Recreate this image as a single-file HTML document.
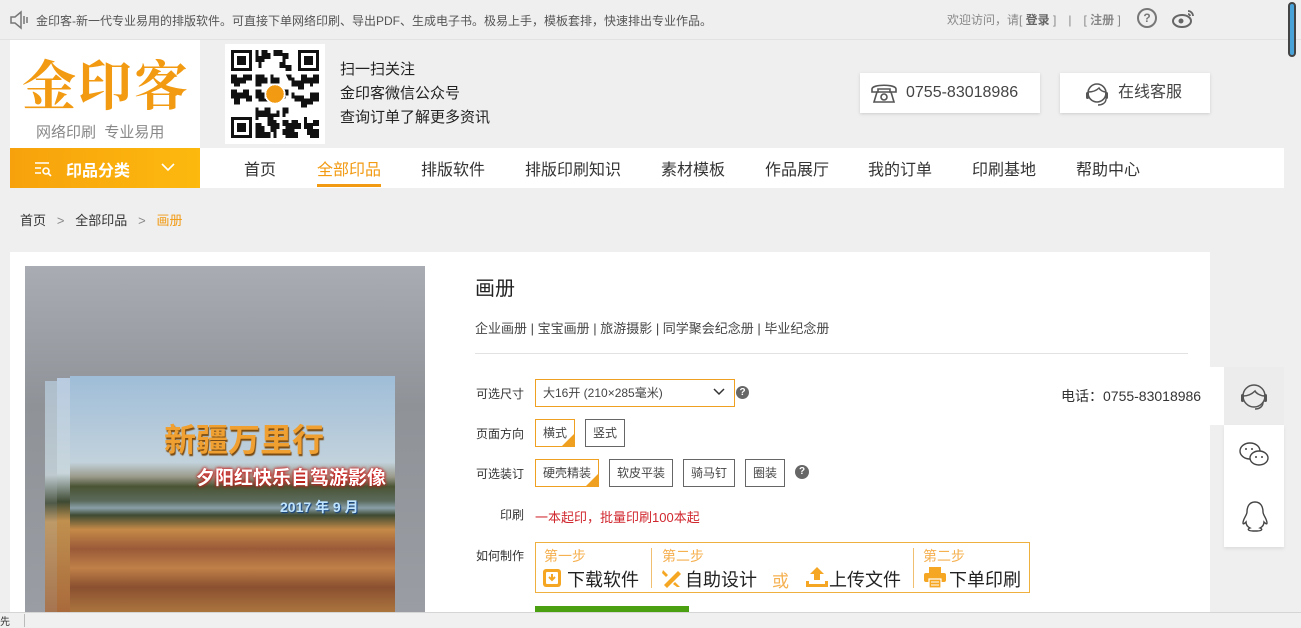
<!DOCTYPE html>
<html><head><meta charset="utf-8">
<style>
*{margin:0;padding:0;box-sizing:border-box}
body{width:1301px;height:627px;overflow:hidden;background:#efefef;font-family:"Liberation Sans","Noto Sans CJK SC",sans-serif;color:#333;position:relative;font-size:13px}
.a{position:absolute}
.top{top:0;left:0;width:1301px;height:40px;border-bottom:1px solid #e2e2e2;font-size:12px;color:#555}
.nav a{position:absolute;top:156px;font-size:16px;color:#333}
.opt{position:absolute;height:28px;border:1px solid #666;background:#fff;font-size:12px;line-height:26px;padding:0 7px;color:#444}
.sel{border-color:#f0a020}
.sel:after{content:"";position:absolute;right:0;bottom:0;border-style:solid;border-width:0 0 12px 12px;border-color:transparent transparent #f0a020 transparent}
.lbl{position:absolute;font-size:12px;color:#333}
</style></head><body>
<div class="a top">
 <svg class="a" style="left:8px;top:10px" width="22" height="20" viewBox="0 0 22 20"><path d="M3 7h4l6-5v16l-6-5H3z" fill="none" stroke="#777" stroke-width="1.5"/><path d="M16 6v8M19 7v6" stroke="#777" stroke-width="1.5"/></svg>
 <div class="a" style="left:36px;top:12px">金印客-新一代专业易用的排版软件。可直接下单网络印刷、导出PDF、生成电子书。极易上手，模板套排，快速排出专业作品。</div>
 <div class="a" style="left:947px;top:11px;color:#888">欢迎访问，请[ <b style="color:#666">登录</b> ]　|　[ <b style="color:#888">注册</b> ]</div>
 <div class="a" style="left:1137px;top:8px;width:20px;height:20px;border:2px solid #777;border-radius:50%;text-align:center;line-height:16px;font-weight:bold;color:#777">?</div>
 <svg class="a" style="left:1172px;top:8px" width="24" height="20" viewBox="0 0 24 20"><ellipse cx="10" cy="13" rx="9" ry="6" fill="none" stroke="#666" stroke-width="2"/><circle cx="9" cy="13" r="2.5" fill="#666"/><path d="M16 3a5 5 0 0 1 5 5M16 6a2 2 0 0 1 2 2" fill="none" stroke="#666" stroke-width="1.8"/></svg>
</div>
<div class="a" style="left:1288px;top:2px;width:8px;height:55px;border:2px solid #444;border-radius:4px;background:#4aa3d8"></div>
<div class="a" style="left:10px;top:40px;width:190px;height:108px;background:#fff"></div>
<div class="a" style="left:22px;top:48px;font-size:54px;font-weight:bold;color:#f29a12;font-family:'Noto Serif CJK SC',serif;letter-spacing:2px;line-height:70px">金印客</div>
<div class="a" style="left:36px;top:121px;font-size:15px;color:#888">网络印刷&nbsp;&nbsp;专业易用</div>
<div class="a" style="left:225px;top:44px;width:100px;height:100px;background:#fff"></div>
<svg class="a" style="left:231px;top:50px" width="88" height="88" viewBox="0 0 29 29" shape-rendering="crispEdges">
<rect width="29" height="29" fill="#fff"/>
<g fill="#111"><rect x="0" y="0" width="7" height="7"/><rect x="22" y="0" width="7" height="7"/><rect x="0" y="22" width="7" height="7"/></g>
<g fill="#fff"><rect x="1" y="1" width="5" height="5"/><rect x="23" y="1" width="5" height="5"/><rect x="1" y="23" width="5" height="5"/></g>
<g fill="#111"><rect x="2" y="2" width="3" height="3"/><rect x="24" y="2" width="3" height="3"/><rect x="2" y="24" width="3" height="3"/>
<path d="M8 0h1v2h1V0h2v1h1v2h-2v1h-1v2H9V4H8zM14 0h3v1h2v2h-1v2h2v2h-2V6h-2V4h1V2h-3zM0 8h2v1h2V8h3v2H5v1H3v1H1v-1H0zM8 8h3v1h1v2h-2v1H8zM13 8h1v1h2v2h-3zM18 8h2v1h1v1h2V8h2v1h2V8h2v3h-2v1h-1v-1h-2v2h-2v-1h-2v-2h-1zM0 13h2v1h2v-1h2v2h1v2H5v-1H3v2H1v-2H0zM8 13h2v1h1v2h2v1H9v-1H8zM17 13h2v2h-1v1h-1zM20 14h1v1h3v1h2v-2h3v3h-2v1h-2v1h-2v-2h-2v-1h-1zM8 19h1v1h2v-1h2v2h2v-1h1v2h-2v1h-2v-1H9v1H8zM17 19h2v2h-1v1h-1zM8 24h2v1h1v2h2v2H8zM12 23h3v1h1v2h-1v1h-2v-2h-1zM17 23h2v1h1v-1h2v1h1v2h-2v1h1v2h-4v-1h-1v-2h1v-1h-1zM24 22h1v2h2v-1h2v2h-2v1h2v3h-3v-1h-1v-2h-1zM14 27h1v2h-1z"/></g>
<circle cx="14.5" cy="14.5" r="3.2" fill="#f29a12" stroke="#fff" stroke-width=".6"/></svg>
<div class="a" style="left:340px;top:58px;font-size:15px;line-height:24px;color:#222">扫一扫关注<br>金印客微信公众号<br>查询订单了解更多资讯</div>
<div class="a" style="left:860px;top:73px;width:180px;height:40px;background:#fff;box-shadow:0 1px 3px #ccc;font-size:16px;line-height:40px;padding-left:46px;color:#444">0755-83018986</div>
<svg class="a" style="left:870px;top:80px" width="28" height="26" viewBox="0 0 28 26"><path d="M2 9c0-5 24-5 24 0v3h-6V9H8v3H2z" fill="none" stroke="#555" stroke-width="1.6"/><path d="M7 12l-3 10h20l-3-10z" fill="none" stroke="#555" stroke-width="1.6"/><circle cx="14" cy="17" r="3" fill="none" stroke="#555" stroke-width="1.6"/></svg>
<div class="a" style="left:1060px;top:73px;width:150px;height:40px;background:#fff;box-shadow:0 1px 3px #ccc;font-size:16px;line-height:40px;padding-left:58px;color:#444">在线客服</div>
<svg class="a" style="left:1083px;top:80px" width="28" height="28" viewBox="0 0 28 28"><circle cx="14" cy="13" r="9" fill="none" stroke="#555" stroke-width="1.6"/><path d="M5 12c4 0 8-1 11-4 1 2 4 4 7 4" fill="none" stroke="#555" stroke-width="1.4"/><rect x="3" y="12" width="3" height="7" rx="1.5" fill="#555"/><rect x="22" y="12" width="3" height="7" rx="1.5" fill="#555"/><path d="M23 19c0 4-4 6-8 6" fill="none" stroke="#555" stroke-width="1.4"/></svg>
<div class="a" style="left:10px;top:148px;width:1274px;height:40px;background:#fff"></div>
<div class="a" style="left:10px;top:148px;width:190px;height:40px;background:linear-gradient(90deg,#f7a20c,#fdb90e)"></div>
<svg class="a" style="left:34px;top:161px" width="18" height="16" viewBox="0 0 18 16"><path d="M1 2h14M1 7h6M1 12h6" stroke="#fff" stroke-width="1.6"/><circle cx="12" cy="10" r="3" fill="none" stroke="#fff" stroke-width="1.6"/><path d="M14 12l3 3" stroke="#fff" stroke-width="1.6"/></svg>
<div class="a" style="left:66px;top:157px;font-size:16px;font-weight:bold;color:#fff">印品分类</div>
<svg class="a" style="left:160px;top:162px" width="16" height="10" viewBox="0 0 16 10"><path d="M2 2l6 6 6-6" fill="none" stroke="#fff" stroke-width="1.6"/></svg>
<div class="nav">
<a style="left:244px">首页</a><a style="left:317px;color:#f29a12">全部印品</a><a style="left:421px">排版软件</a><a style="left:525px">排版印刷知识</a><a style="left:661px">素材模板</a><a style="left:765px">作品展厅</a><a style="left:868px">我的订单</a><a style="left:972px">印刷基地</a><a style="left:1076px">帮助中心</a>
</div>
<div class="a" style="left:317px;top:184px;width:64px;height:3px;background:#f29a12"></div>
<div class="a" style="left:20px;top:210px;font-size:13px;color:#333">首页 &nbsp;&nbsp;<span style="color:#888">&gt;</span>&nbsp;&nbsp; 全部印品 &nbsp;&nbsp;<span style="color:#888">&gt;</span>&nbsp;&nbsp; <span style="color:#f29a12">画册</span></div>
<div class="a" style="left:10px;top:252px;width:1200px;height:375px;background:#fff"></div>
<div class="a" style="left:25px;top:266px;width:400px;height:350px;background:linear-gradient(180deg,#a9acb3,#8f9398 40%,#9a9ea4)"></div>
<div class="a" style="left:45px;top:381px;width:20px;height:235px;background:linear-gradient(180deg,#b5c8d8 0%,#c8d6dc 40%,#3e4a32 52%,#c89a5a 60%,#a8683a);opacity:.8"></div>
<div class="a" style="left:57px;top:378px;width:15px;height:238px;background:linear-gradient(180deg,#b8cbe0 0%,#c8d6dc 40%,#3e4a32 52%,#c0904f 60%,#a8683a)"></div>
<div class="a" style="left:70px;top:376px;width:325px;height:240px;background:linear-gradient(180deg,#9fbdd8 0%,#c2d2dc 36%,#9a9a8a 42%,#4a5434 46%,#5b6a5c 52%,#8aa0a8 55%,#3e4a32 58%,#c58a48 64%,#9a5a38 72%,#c08048 80%,#8a5030 88%,#b07a40 100%)"></div>
<div class="a" style="left:164px;top:415px;font-size:32px;font-weight:bold;color:#f0a030;text-shadow:1px 2px 1px #7a4a10">新疆万里行</div>
<div class="a" style="left:196px;top:463px;font-size:19px;font-weight:bold;color:#fff;text-shadow:0 0 3px #d01010,0 0 3px #d01010">夕阳红快乐自驾游影像</div>
<div class="a" style="left:280px;top:497px;font-size:14px;font-weight:bold;color:#bfe4ff;text-shadow:1px 1px 1px #104080">2017 年 9 月</div>
<div class="a" style="left:475px;top:272px;font-size:20px;color:#222">画册</div>
<div class="a" style="left:475px;top:318px;font-size:13px;color:#444">企业画册 | 宝宝画册 | 旅游摄影 | 同学聚会纪念册 | 毕业纪念册</div>
<div class="a" style="left:475px;top:353px;width:713px;height:1px;background:#e2e2e2"></div>
<div class="lbl" style="left:476px;top:385px">可选尺寸</div>
<div class="opt" style="left:535px;top:379px;width:200px;border-color:#f0a020;font-size:12px">大16开 (210×285毫米)</div>
<svg class="a" style="left:713px;top:388px" width="12" height="8" viewBox="0 0 12 8"><path d="M1 1l5 5 5-5" fill="none" stroke="#333" stroke-width="1.5"/></svg>
<div class="a" style="left:736px;top:386px;width:13px;height:13px;border-radius:50%;background:#666;color:#fff;font-size:10px;text-align:center;line-height:13px;font-weight:bold">?</div>
<div class="lbl" style="left:476px;top:425px">页面方向</div>
<div class="opt sel" style="left:535px;top:419px">横式</div>
<div class="opt" style="left:585px;top:419px">竖式</div>
<div class="lbl" style="left:476px;top:465px">可选装订</div>
<div class="opt sel" style="left:535px;top:459px">硬壳精装</div>
<div class="opt" style="left:609px;top:459px">软皮平装</div>
<div class="opt" style="left:683px;top:459px">骑马钉</div>
<div class="opt" style="left:745px;top:459px">圈装</div>
<div class="a" style="left:795px;top:465px;width:14px;height:14px;border-radius:50%;background:#666;color:#fff;font-size:10px;text-align:center;line-height:14px;font-weight:bold">?</div>
<div class="lbl" style="left:500px;top:506px">印刷</div>
<div class="a" style="left:535px;top:507px;font-size:13px;color:#d0282f">一本起印，批量印刷100本起</div>
<div class="lbl" style="left:476px;top:547px">如何制作</div>
<div class="a" style="left:535px;top:542px;width:495px;height:51px;border:1px solid #f0b040;background:#fff"></div>
<div class="a" style="left:651px;top:548px;width:1px;height:40px;background:#f0c070"></div>
<div class="a" style="left:913px;top:548px;width:1px;height:40px;background:#f0c070"></div>
<div class="a" style="left:544px;top:546px;font-size:14px;color:#f5b050">第一步</div>
<div class="a" style="left:662px;top:546px;font-size:14px;color:#f5b050">第二步</div>
<div class="a" style="left:923px;top:546px;font-size:14px;color:#f5b050">第二步</div>
<svg class="a" style="left:543px;top:569px" width="18" height="18" viewBox="0 0 18 18"><rect width="18" height="18" rx="3" fill="#f5a623"/><rect x="3" y="3" width="12" height="12" rx="1" fill="#fff"/><path d="M9 5v6M6 8l3 3 3-3" stroke="#f5a623" stroke-width="2" fill="none"/></svg>
<div class="a" style="left:567px;top:566px;font-size:18px;color:#222">下载软件</div>
<svg class="a" style="left:661px;top:568px" width="22" height="20" viewBox="0 0 22 20"><path d="M3 17L17 3l3 3L6 20z" fill="#f5a623"/><path d="M2 2l5 5-2 2-4-4zM14 14l5 5-3 0-4-3z" fill="#f5a623"/></svg>
<div class="a" style="left:685px;top:566px;font-size:18px;color:#222">自助设计</div>
<div class="a" style="left:772px;top:567px;font-size:17px;color:#f5b050">或</div>
<svg class="a" style="left:806px;top:567px" width="22" height="20" viewBox="0 0 22 20"><path d="M11 0l7 7h-4v6H8V7H4z" fill="#f5a623"/><path d="M0 14h3v3h16v-3h3v6H0z" fill="#f5a623"/></svg>
<div class="a" style="left:829px;top:566px;font-size:18px;color:#222">上传文件</div>
<svg class="a" style="left:924px;top:567px" width="22" height="21" viewBox="0 0 22 21"><rect x="5" y="0" width="12" height="6" fill="#f5a623"/><rect x="0" y="6" width="22" height="9" rx="2" fill="#f5a623"/><rect x="5" y="12" width="12" height="9" fill="#f5a623" stroke="#fff" stroke-width="1.2"/><path d="M7 15h8M7 18h8" stroke="#fff"/></svg>
<div class="a" style="left:949px;top:566px;font-size:18px;color:#222">下单印刷</div>
<div class="a" style="left:535px;top:606px;width:154px;height:8px;background:#4aa010"></div>
<div class="a" style="left:1050px;top:367px;width:174px;height:58px;background:#fff;font-size:14px;line-height:58px;padding-left:11px;color:#333">电话：0755-83018986</div>
<div class="a" style="left:1224px;top:367px;width:60px;height:58px;background:#ececec"></div>
<svg class="a" style="left:1237px;top:380px" width="34" height="34" viewBox="0 0 34 34"><circle cx="17" cy="16" r="11" fill="none" stroke="#555" stroke-width="1.5"/><path d="M6 16c5 0 9-2 12-5 1 2 5 5 10 5M26 22c0 5-4 7-8 7" fill="none" stroke="#555" stroke-width="1.5"/><rect x="4" y="14" width="3" height="8" rx="1.5" fill="#555"/><rect x="27" y="14" width="3" height="8" rx="1.5" fill="#555"/></svg>
<div class="a" style="left:1224px;top:425px;width:60px;height:122px;background:#fff;box-shadow:0 2px 3px #ddd"></div>
<svg class="a" style="left:1237px;top:440px" width="34" height="30" viewBox="0 0 34 30"><ellipse cx="13" cy="11" rx="10" ry="8" fill="#fff" stroke="#444" stroke-width="1.4"/><ellipse cx="22" cy="18" rx="9" ry="7" fill="#fff" stroke="#444" stroke-width="1.4"/><circle cx="9" cy="9" r="1" fill="#444"/><circle cx="15" cy="9" r="1" fill="#444"/><circle cx="19" cy="17" r="1" fill="#444"/><circle cx="25" cy="17" r="1" fill="#444"/></svg>
<svg class="a" style="left:1240px;top:500px" width="30" height="34" viewBox="0 0 30 34"><path d="M15 2c-6 0-8 5-8 10 0 3-4 7-4 11 0 2 2 0 3-1 0 3 2 5 4 6-3 1-2 3 3 3h4c5 0 6-2 3-3 2-1 4-3 4-6 1 1 3 3 3 1 0-4-4-8-4-11 0-5-2-10-8-10z" fill="none" stroke="#444" stroke-width="1.4"/></svg>
<div class="a" style="left:0;top:612px;width:1301px;height:15px;background:#f0f0f0;border-top:1px solid #d5d5d5"></div>
<div class="a" style="left:0;top:613px;font-size:10px;color:#333">先</div>
<div class="a" style="left:24px;top:614px;width:1px;height:13px;background:#bbb"></div>
</body></html>
